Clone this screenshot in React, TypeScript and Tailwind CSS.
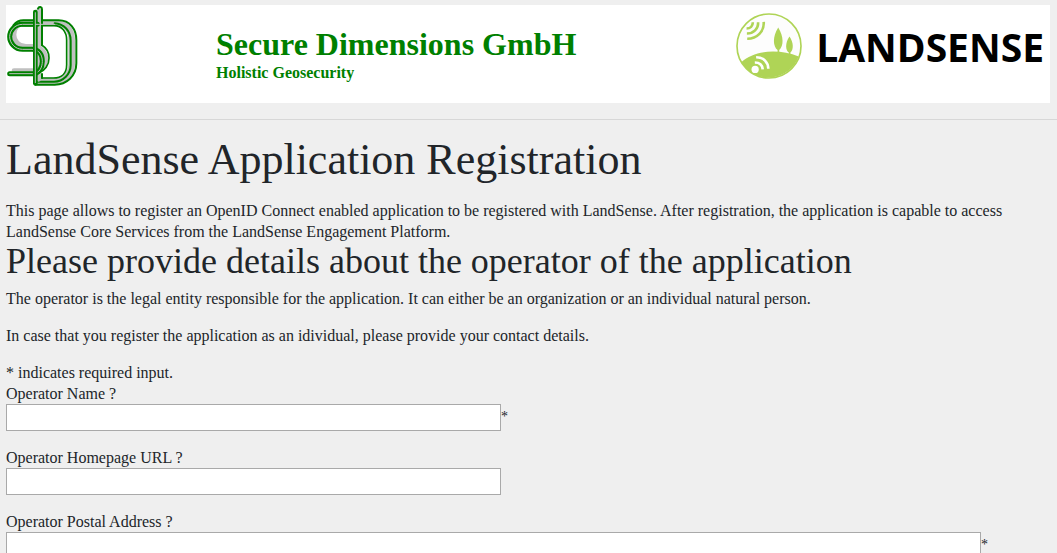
import type { ReactNode } from "react";

const S_CURVE = "M112 73H68C44 73 29 92 29 110S44 148 68 148H96C118 148 127 166 127 184S118 221 98 221H29";

function SecureDimensionsLogo() {
  return (
    <svg viewBox="18 15 216 246" className="h-[82px] w-[72px] shrink-0" fill="none" strokeLinecap="round" strokeLinejoin="round" role="img" aria-label="Secure Dimensions">
      <path d="M106 67H78C54 67 42 86 42 104S56 139 78 139H104C124 142 137 158 137 176S124 212 104 212H42" stroke="#c0c0c0" strokeWidth="14" />
      <path d="M70 69H168C200 69 215 94 215 120V192C215 222 192 243 162 243H112" stroke="#c0c0c0" strokeWidth="20" />
      <path d="M40 76C48 66 58 61 70 61H176C210 61 229 88 229 120V190C229 228 200 254 164 254H106" stroke="#008000" strokeWidth="6" />
      <path d="M164 70C192 72 212 92 212 122V196C212 222 190 245 162 245H112" stroke="#008000" strokeWidth="6" />
      <path d="M68 77H162C186 77 200 96 200 120V194C200 218 186 234 160 234H126" stroke="#008000" strokeWidth="5" />
      <path d="M116 30V238" stroke="#c0c0c0" strokeWidth="14" />
      <path d="M114 26C117 18 126 20 126 28V136M126 222V234" stroke="#008000" strokeWidth="6" />
      <path d="M126 136C139 144 147 158 147 174C147 196 134 212 118 218" stroke="#008000" strokeWidth="5" />
      <path d={S_CURVE} stroke="#008000" strokeWidth="15" />
      <path d={S_CURVE} stroke="#c0c0c0" strokeWidth="3" />
      <path d="M106 36V250" stroke="#008000" strokeWidth="14" />
      <path d="M106 38V248" stroke="#c0c0c0" strokeWidth="3" />
      <path d="M107 73H164" stroke="#c0c0c0" strokeWidth="3" />
    </svg>
  );
}

function LandSenseLogo() {
  return (
    <svg viewBox="0 0 200 200" className="h-[66px] w-[66px] shrink-0" fill="none" aria-hidden="true">
      <circle cx="100" cy="100" r="97" fill="#fdfdfd" />
      <path d="M16 149C58 112 130 108 190 132A97 97 0 0 1 16 149Z" fill="#afd456" />
      <circle cx="100" cy="100" r="97" stroke="#afd456" strokeWidth="5" />
      <path d="M128 44C110 72 112 102 126 112V122H131V112C145 100 145 72 128 44ZM162 71C148 92 150 112 160 120V128H165V120C175 110 175 90 162 71Z" fill="#afd456" />
      <g stroke="#afd456" strokeWidth="8">
        <path d="M32 47C43 47 51 39 51 28" />
        <path d="M33 62C53 62 68 48 67 28" />
        <path d="M34 78C64 78 86 56 84 27" />
      </g>
      <circle cx="58" cy="171" r="11" fill="#fff" />
      <g stroke="#fff" strokeWidth="8">
        <path d="M57 150C72 150 80 158 81 171" />
        <path d="M61 134C83 134 97 148 98 169" />
      </g>
    </svg>
  );
}

type FieldProps = { id: string; label: string; required?: boolean; children: ReactNode };

function Field({ id, label, required, children }: FieldProps) {
  return (
    <div className="mb-4">
      <label htmlFor={id} className="block">{label} ?</label>
      <div className="flex items-start">
        {children}
        {required && <span className="pt-0.5 text-sm leading-[21px]">*</span>}
      </div>
    </div>
  );
}

const box = "block h-[27px] min-w-0 border border-[#a9a9a9] bg-white px-1 outline-none";

export default function App() {
  return (
    <div className="min-h-screen bg-[#efefef] pt-[5px] font-['Palatino_Linotype','Book_Antiqua',Palatino,'Liberation_Serif',serif] text-[16px] leading-[21px] text-[#212529]">
      <header className="ml-1.5 mr-[7px] flex h-[98px] items-start bg-white">
        <div className="flex flex-1 items-start">
          <div className="w-[210px] shrink-0">
            <SecureDimensionsLogo />
          </div>
          <div className="pt-5 font-['Liberation_Serif',serif] font-bold text-[#008000]">
            <div className="text-[32px] leading-[38px]">Secure Dimensions GmbH</div>
            <div className="text-[16px] leading-5">Holistic Geosecurity</div>
          </div>
        </div>
        <div className="flex items-center gap-3.5 pr-1.5 pt-2">
          <LandSenseLogo />
          <span className="pt-0.5 font-['Open_Sans',sans-serif] text-[39px] font-bold leading-[60px] text-black">LANDSENSE</span>
        </div>
      </header>
      <hr className="mt-4 border-[#d7d7d7]" />
      <main className="px-1.5 pt-4">
        <h1 className="mb-4 text-[44px] leading-[48px]">LandSense Application Registration</h1>
        <p>
          This page allows to register an OpenID Connect enabled application to be registered with LandSense. After registration, the application is capable to access LandSense Core Services from the LandSense Engagement Platform.
        </p>
        <h2 className="mb-2 text-[36px] leading-[38px]">Please provide details about the operator of the application</h2>
        <p className="mb-4">The operator is the legal entity responsible for the application. It can either be an organization or an individual natural person.</p>
        <p className="mb-4">In case that you register the application as an idividual, please provide your contact details.</p>
        <form>
          <p>* indicates required input.</p>
          <Field id="operator-name" label="Operator Name" required>
            <input id="operator-name" type="text" required className={`${box} w-[495px]`} />
          </Field>
          <Field id="operator-url" label="Operator Homepage URL">
            <input id="operator-url" type="url" className={`${box} w-[495px]`} />
          </Field>
          <Field id="operator-address" label="Operator Postal Address" required>
            <input id="operator-address" type="text" required className={`${box} w-[975px]`} />
          </Field>
        </form>
      </main>
    </div>
  );
}
